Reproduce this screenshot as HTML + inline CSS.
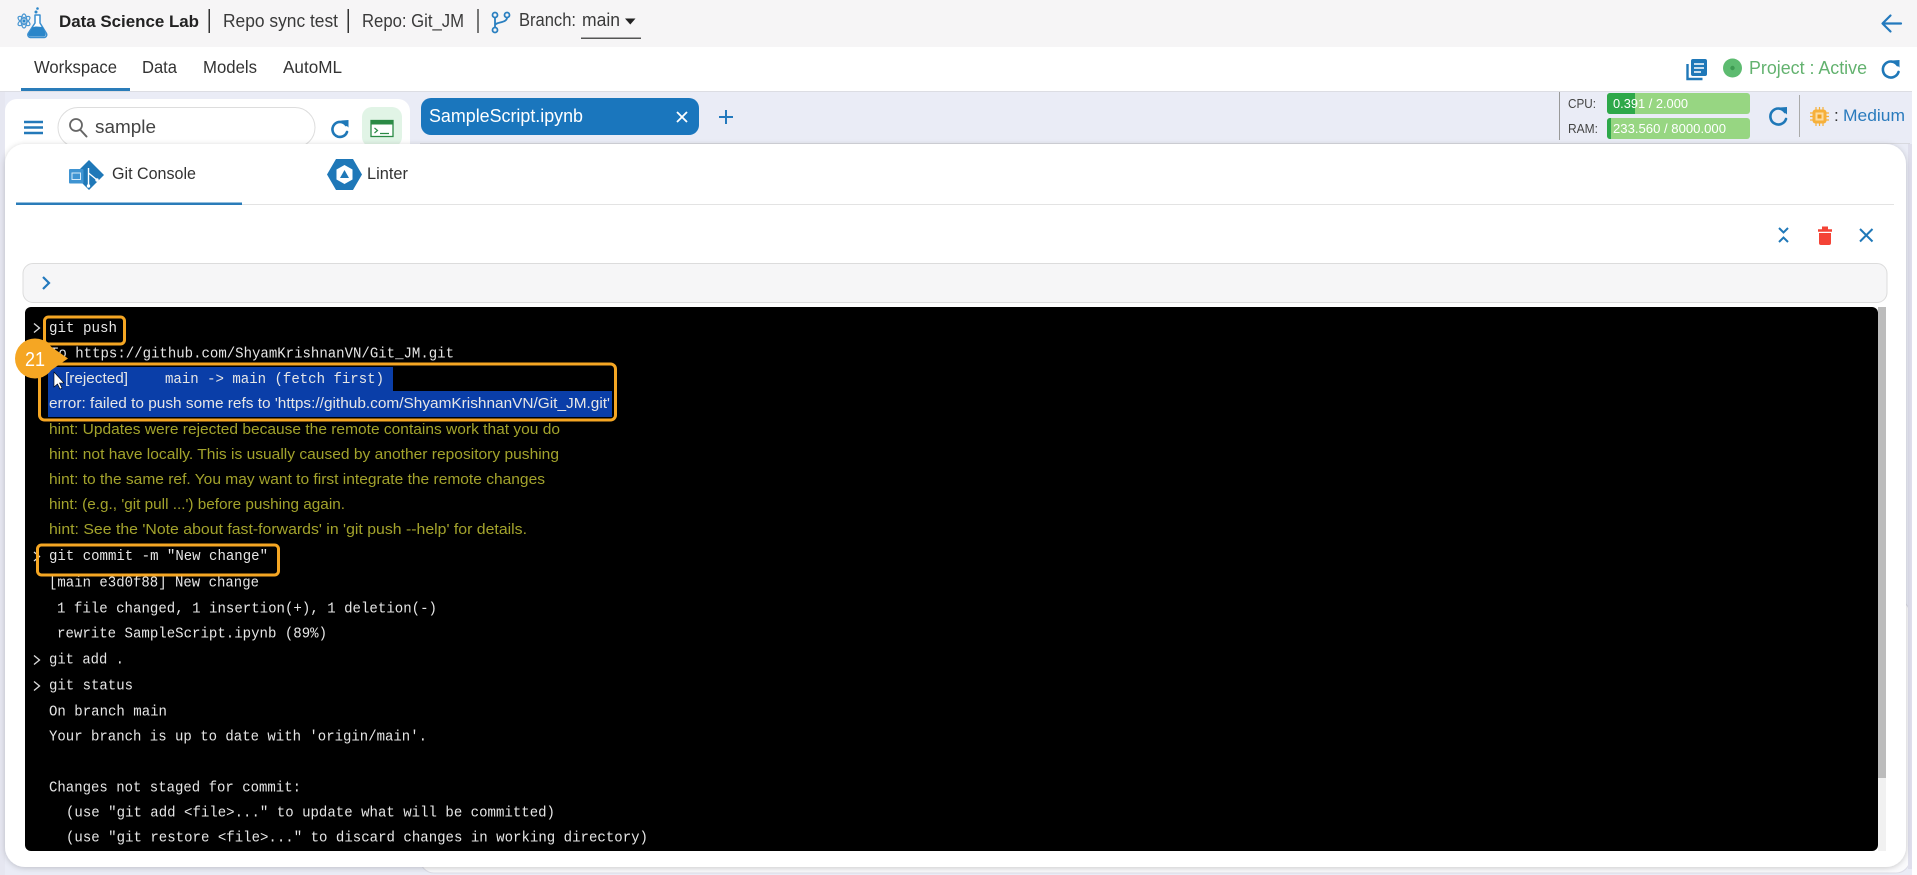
<!DOCTYPE html>
<html><head><meta charset="utf-8"><title>Data Science Lab</title>
<style>
html,body{margin:0;padding:0;background:#fff;width:1917px;height:875px;overflow:hidden}
svg{display:block}
text{font-family:"Liberation Sans",sans-serif}
.m{font-family:"Liberation Mono",monospace;font-size:15px;fill:#e6e6e6}
.s{font-size:15px;fill:#e6e6e6}
.h{font-size:15px;fill:#a3a32c}
.u{font-size:17.500px;fill:#333}
.ic{fill:none;stroke:#1f78b8;stroke-width:2.600;stroke-linecap:round;stroke-linejoin:round}
</style></head><body>
<svg width="1917" height="875" viewBox="0 0 1917 875" xmlns="http://www.w3.org/2000/svg">
<defs>
<filter id="sh" x="-3%" y="-3%" width="106%" height="106%"><feDropShadow dx="0" dy="1" stdDeviation="3" flood-color="#000" flood-opacity=".2"/></filter>
</defs>
<!-- base -->
<rect width="1917" height="875" fill="#fff"/>
<rect width="1917" height="47" fill="#f6f5f6"/>
<rect x="0" y="91" width="1912" height="1" fill="#dcdde3"/>
<rect x="0" y="92" width="1912" height="783" fill="#eaecf6"/>
<rect x="1912" y="92" width="5" height="783" fill="#fff"/>
<rect x="0" y="92" width="5" height="783" fill="#e6e7f1"/>
<rect x="420" y="143" width="1490" height="1" fill="#d8d9df"/>
<rect x="420" y="600" width="1490" height="273" rx="14" fill="#fafafc" stroke="#dcdce6"/>
<rect x="1908" y="144" width="4" height="725" fill="#dfdfec"/>

<!-- header -->
<g>
<ellipse cx="24" cy="21" rx="7" ry="2.800" fill="none" stroke="#4a97d2" stroke-width="1.200" transform="rotate(35 24 21)"/>
<ellipse cx="24" cy="21" rx="7" ry="2.800" fill="none" stroke="#4a97d2" stroke-width="1.200" transform="rotate(-35 24 21)"/>
<ellipse cx="24" cy="21" rx="2.800" ry="7" fill="none" stroke="#4a97d2" stroke-width="1.200"/>
<circle cx="24" cy="21" r="1.600" fill="#2b86c9"/>
<path d="M35 15h5v8l6.500 10.500a2.800 2.800 0 0 1-2.400 4H30.500a2.800 2.800 0 0 1-2.400-4L35 23z" fill="#fff" stroke="#3b8fd0" stroke-width="1.500" stroke-linejoin="round"/>
<path d="M32.500 27.500c3.500-1.800 6-.5 10.500-.5l2.500 6.500a2 2 0 0 1-1.800 3H30.500a2 2 0 0 1-1.800-3z" fill="#2b86c9"/>
<circle cx="36" cy="12" r="1.500" fill="#2b86c9"/><circle cx="37.500" cy="8.500" r="1.300" fill="#2b86c9"/>
</g>
<text x="59" y="27" font-size="17" font-weight="bold" fill="#222" textLength="140" lengthAdjust="spacingAndGlyphs">Data Science Lab</text>
<rect x="208.500" y="9" width="1.500" height="24" fill="#333"/>
<text x="223" y="27" font-size="18" fill="#3a3a3a" textLength="115" lengthAdjust="spacingAndGlyphs">Repo sync test</text>
<rect x="347.500" y="9" width="1.500" height="24" fill="#333"/>
<text x="362" y="27" font-size="18" fill="#3a3a3a" textLength="102" lengthAdjust="spacingAndGlyphs">Repo: Git_JM</text>
<rect x="477" y="9" width="2" height="24" fill="#777"/>
<g fill="none" stroke="#2a7fc0" stroke-width="1.800">
<circle cx="495" cy="15" r="2.500"/><circle cx="507" cy="15" r="2.500"/><circle cx="495" cy="30" r="2.500"/>
<path d="M495 17.500v10M507 17.500c0 6-12 4-12 8"/>
</g>
<text x="519" y="26" font-size="18" fill="#3a3a3a" textLength="57" lengthAdjust="spacingAndGlyphs">Branch:</text>
<text x="582" y="26" font-size="18" fill="#3a3a3a" textLength="38" lengthAdjust="spacingAndGlyphs">main</text>
<path d="M625 18.500h10.500l-5.200 6z" fill="#222"/>
<rect x="581" y="37.500" width="60" height="1.500" fill="#555"/>
<path d="M1901 23.500h-18M1890.500 15.500l-8 8 8 8" fill="none" stroke="#2379bd" stroke-width="2.200" stroke-linecap="round" stroke-linejoin="round"/>

<!-- nav -->
<text x="34" y="73" class="u" textLength="83" lengthAdjust="spacingAndGlyphs">Workspace</text>
<text x="142" y="73" class="u" textLength="35" lengthAdjust="spacingAndGlyphs">Data</text>
<text x="203" y="73" class="u" textLength="54" lengthAdjust="spacingAndGlyphs">Models</text>
<text x="283" y="73" class="u" textLength="59" lengthAdjust="spacingAndGlyphs">AutoML</text>
<rect x="21" y="88" width="109" height="3" fill="#2a7cb9"/>
<g>
<path d="M1687.500 64v15h15" fill="none" stroke="#1f78b8" stroke-width="2.400"/>
<rect x="1691" y="59" width="16" height="17" rx="2" fill="#1f78b8"/>
<path d="M1694 64h10M1694 68h10M1694 72h7" stroke="#fff" stroke-width="1.500"/>
</g>
<circle cx="1732.500" cy="68" r="9.500" fill="#5dbb70"/><circle cx="1732.500" cy="68" r="2.200" fill="#3d9a52"/>
<text x="1749" y="74" font-size="18" fill="#63b26f" textLength="118" lengthAdjust="spacingAndGlyphs">Project : Active</text>
<path class="ic" d="M1897.500 65a8 8 0 1 0 1 7"/><path d="M1892 60.500l7.500-.5v7.500z" fill="#1f78b8"/>

<!-- resource bar -->
<rect x="1559" y="92" width="1" height="48" fill="#999"/>
<text x="1568" y="108" font-size="13" fill="#444" textLength="28" lengthAdjust="spacingAndGlyphs">CPU:</text>
<text x="1568" y="133" font-size="13" fill="#444" textLength="30" lengthAdjust="spacingAndGlyphs">RAM:</text>
<rect x="1607" y="93" width="143" height="21" rx="3" fill="#97d682"/>
<path d="M1610 93h25v21h-25a3 3 0 0 1-3-3V96a3 3 0 0 1 3-3z" fill="#2ea84a"/>
<rect x="1607" y="118" width="143" height="21" rx="3" fill="#97d682"/>
<path d="M1610 118h1v21h-1a3 3 0 0 1-3-3v-15a3 3 0 0 1 3-3z" fill="#2ea84a"/>
<text x="1613" y="108" font-size="13" fill="#fff" textLength="75" lengthAdjust="spacingAndGlyphs">0.391 / 2.000</text>
<text x="1613" y="133" font-size="13" fill="#fff" textLength="113" lengthAdjust="spacingAndGlyphs">233.560 / 8000.000</text>
<path class="ic" d="M1785 112a8 8 0 1 0 1 7"/><path d="M1779.500 107.500l7.500-.5v7.500z" fill="#1f78b8"/>
<rect x="1799" y="95" width="1" height="42" fill="#aaa"/>
<g>
<rect x="1812.500" y="109.500" width="14" height="14" rx="3" fill="#f6b03a"/>
<rect x="1815.500" y="112.500" width="8" height="8" fill="#fcdca0"/>
<rect x="1817.500" y="114.500" width="4" height="4" fill="#f0a020"/>
<path d="M1816 107v19M1819.500 107v19M1823 107v19M1810 113h19M1810 116.500h19M1810 120h19" stroke="#f6b03a" stroke-width="1.200" stroke-dasharray="3 13 3"/>
</g>
<text x="1834" y="121" font-size="17" fill="#333">:</text>
<text x="1843" y="121" font-size="17" fill="#2a7bbd" textLength="62" lengthAdjust="spacingAndGlyphs">Medium</text>

<!-- left panel -->
<rect x="5" y="99" width="405" height="90" rx="12" fill="#fff"/>
<path d="M24 122h19M24 127.500h19M24 133h19" stroke="#2379b9" stroke-width="2.400"/>
<rect x="58" y="107.500" width="257" height="40" rx="20" fill="#fff" stroke="#ddd"/>
<circle cx="76" cy="125" r="6" fill="none" stroke="#666" stroke-width="1.800"/><path d="M80.500 130l6 6.500" stroke="#666" stroke-width="2" stroke-linecap="round"/>
<text x="95" y="133" font-size="18" fill="#444" textLength="61" lengthAdjust="spacingAndGlyphs">sample</text>
<path class="ic" d="M346 125a7.500 7.500 0 1 0 1 7"/><path d="M341 120.500l7.500-.5v7.500z" fill="#1f78b8"/>
<rect x="362" y="107" width="40" height="40" rx="10" fill="#e1f4e6"/>
<rect x="371" y="120.500" width="22" height="16" fill="#fff" stroke="#2b8a45" stroke-width="1.300"/>
<rect x="371" y="120.500" width="22" height="4" fill="#2b8a45"/>
<path d="M374.500 128l3 2.500-3 2.500M380 133.500h9" fill="none" stroke="#2b8a45" stroke-width="1.200"/>

<!-- open tab -->
<rect x="421" y="98" width="278" height="37" rx="10" fill="#1a76bd"/>
<text x="429" y="122" font-size="18" fill="#fff" textLength="154" lengthAdjust="spacingAndGlyphs">SampleScript.ipynb</text>
<path d="M677 112l10 10M687 112l-10 10" stroke="#fff" stroke-width="1.800"/>
<path d="M726 110v14M719 117h14" stroke="#2379bd" stroke-width="2"/>

<!-- modal -->
<rect x="5" y="144" width="1901" height="723" rx="20" fill="#fff" filter="url(#sh)"/>
<!-- tabs -->
<g>
<path d="M89 160l15 15-15 15-15-15z" fill="#1f78b8"/>
<rect x="69" y="169" width="14.500" height="14.500" rx="1" fill="#3f94d2"/>
<rect x="72" y="173" width="8.500" height="6.500" fill="none" stroke="#d5ebfa" stroke-width="1"/>
<path d="M88.500 168v18M88.500 173l8 6.500" stroke="#fff" stroke-width="1.400" fill="none"/>
<circle cx="88.500" cy="186" r="1.700" fill="#fff"/><circle cx="97" cy="180" r="1.700" fill="#fff"/>
</g>
<text x="112" y="179" font-size="16.500" fill="#333" textLength="84" lengthAdjust="spacingAndGlyphs">Git Console</text>
<g>
<path d="M336 159h17l9 15.500-9 15.500h-17l-9-15.500z" fill="#1f78b8"/>
<path d="M344.500 165l8 4.500v10l-8 4.500-8-4.500v-10z" fill="#fff"/>
<path d="M344.500 170l4.500 8h-9z" fill="#1f78b8"/>
</g>
<text x="367" y="179" font-size="16.500" fill="#333" textLength="41" lengthAdjust="spacingAndGlyphs">Linter</text>
<rect x="16" y="204" width="1878" height="1" fill="#e3e3e3"/>
<rect x="16" y="202.500" width="226" height="2.500" fill="#2a7cb9"/>
<!-- actions -->
<path d="M1779 228l4.500 4.500 4.500-4.500M1779 242l4.500-4.500 4.500 4.500" fill="none" stroke="#1f78b8" stroke-width="2"/>
<path d="M1818 230.500h14" stroke="#f44336" stroke-width="2.500"/><rect x="1822" y="226.500" width="6" height="3" fill="#f44336"/>
<path d="M1819 233h12v10a2 2 0 0 1-2 2h-8a2 2 0 0 1-2-2z" fill="#f44336"/>
<path d="M1860 229l12.500 12.500M1872.500 229L1860 241.500" stroke="#1f78b8" stroke-width="2"/>
<!-- input -->
<rect x="23" y="263.500" width="1864" height="39" rx="10" fill="#f6f6f7" stroke="#dcdcdc"/>
<path d="M43 277l6 6-6 6" fill="none" stroke="#2379bd" stroke-width="2.200"/>

<!-- console -->
<rect x="25" y="307" width="1853" height="544" rx="6" fill="#000"/>
<rect x="1878" y="307" width="8" height="544" fill="#f1f1f1"/>
<rect x="1878" y="307" width="8" height="471" fill="#bcbcbc"/>
<rect x="48" y="367" width="345" height="24" fill="#0a3ea8"/>
<rect x="48" y="391" width="564" height="26" fill="#0a3ea8"/>

<path d="M34 323.500l5.500 4.500-5.500 4.500" fill="none" stroke="#ddd" stroke-width="1.300"/>
<text x="49" y="332" class="m" textLength="68" lengthAdjust="spacingAndGlyphs">git push</text>
<text x="50" y="357.500" class="m" textLength="404" lengthAdjust="spacingAndGlyphs">To https://github.com/ShyamKrishnanVN/Git_JM.git</text>
<text x="65" y="383" class="s" textLength="63" lengthAdjust="spacingAndGlyphs">[rejected]</text>
<text x="165" y="383" class="m" textLength="219" lengthAdjust="spacingAndGlyphs">main -&gt; main (fetch first)</text>
<text x="49" y="408" class="s" textLength="561" lengthAdjust="spacingAndGlyphs">error: failed to push some refs to 'https://github.com/ShyamKrishnanVN/Git_JM.git'</text>
<text x="49" y="434" class="h" textLength="511" lengthAdjust="spacingAndGlyphs">hint: Updates were rejected because the remote contains work that you do</text>
<text x="49" y="459" class="h" textLength="510" lengthAdjust="spacingAndGlyphs">hint: not have locally. This is usually caused by another repository pushing</text>
<text x="49" y="484" class="h" textLength="496" lengthAdjust="spacingAndGlyphs">hint: to the same ref. You may want to first integrate the remote changes</text>
<text x="49" y="509" class="h" textLength="296" lengthAdjust="spacingAndGlyphs">hint: (e.g., 'git pull ...') before pushing again.</text>
<text x="49" y="534" class="h" textLength="478" lengthAdjust="spacingAndGlyphs">hint: See the 'Note about fast-forwards' in 'git push --help' for details.</text>
<path d="M34 552l5.500 4.500-5.500 4.500" fill="none" stroke="#ddd" stroke-width="1.300"/>
<text x="49" y="560" class="m" textLength="219" lengthAdjust="spacingAndGlyphs">git commit -m "New change"</text>
<text x="49" y="586.500" class="m" textLength="210" lengthAdjust="spacingAndGlyphs">[main e3d0f88] New change</text>
<text x="57" y="612.500" class="m" textLength="380" lengthAdjust="spacingAndGlyphs">1 file changed, 1 insertion(+), 1 deletion(-)</text>
<text x="57" y="637.500" class="m" textLength="270" lengthAdjust="spacingAndGlyphs">rewrite SampleScript.ipynb (89%)</text>
<path d="M34 655.500l5.500 4.500-5.500 4.500" fill="none" stroke="#ddd" stroke-width="1.300"/>
<text x="49" y="663.500" class="m" textLength="75" lengthAdjust="spacingAndGlyphs">git add .</text>
<path d="M34 681.500l5.500 4.500-5.500 4.500" fill="none" stroke="#ddd" stroke-width="1.300"/>
<text x="49" y="689.500" class="m" textLength="84" lengthAdjust="spacingAndGlyphs">git status</text>
<text x="49" y="715.500" class="m" textLength="118" lengthAdjust="spacingAndGlyphs">On branch main</text>
<text x="49" y="740.500" class="m" textLength="378" lengthAdjust="spacingAndGlyphs">Your branch is up to date with 'origin/main'.</text>
<text x="49" y="791.500" class="m" textLength="252" lengthAdjust="spacingAndGlyphs">Changes not staged for commit:</text>
<text x="66" y="816.500" class="m" textLength="489" lengthAdjust="spacingAndGlyphs">(use "git add &lt;file&gt;..." to update what will be committed)</text>
<text x="66" y="841.500" class="m" textLength="582" lengthAdjust="spacingAndGlyphs">(use "git restore &lt;file&gt;..." to discard changes in working directory)</text>

<!-- annotations -->
<rect x="44.500" y="317" width="80" height="27" rx="4" fill="none" stroke="#f5a623" stroke-width="3"/>
<rect x="39.500" y="364" width="576" height="56" rx="5" fill="none" stroke="#f5a623" stroke-width="3"/>
<rect x="37.500" y="545" width="241" height="30" rx="4" fill="none" stroke="#f5a623" stroke-width="3"/>
<path d="M54 372v15l3.500-3 2.500 5 2-1-2.500-5h4.500z" fill="#fff" stroke="#000" stroke-width=".6"/>
<circle cx="35" cy="358.500" r="20" fill="#f5a623"/>
<path d="M50 346l18 12.500-18 12.500z" fill="#f5a623"/>
<text x="25" y="366" font-size="20" fill="#fff" textLength="20" lengthAdjust="spacingAndGlyphs">21</text>
</svg>
</body></html>
